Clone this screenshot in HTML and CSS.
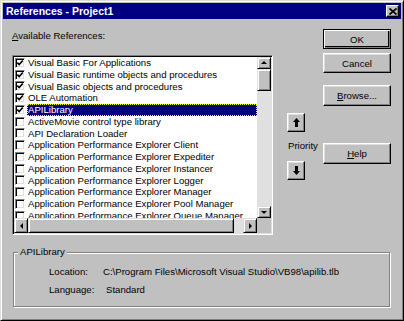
FILE: index.html
```html
<!DOCTYPE html>
<html>
<head>
<link rel="stylesheet" href="styles.css">
</head>
<body>
<div class="window">
    <div class="titlebar">
        <span class="title">References - Project1</span>
        <span class="close-btn"><svg width="8" height="7" viewBox="0 0 8 7"><path d="M0.5 0.5 L7.5 6.5 M7.5 0.5 L0.5 6.5" stroke="#000" stroke-width="1.7"/></svg></span>
    </div>
    <div class="main">
        <div class="col-list">
            <div class="caption"><u>A</u>vailable References:</div>
            <div class="listbox">
                <div class="items">
                    <div class="row"><span class="check on"></span><span class="name">Visual Basic For Applications</span></div>
                    <div class="row"><span class="check on"></span><span class="name">Visual Basic runtime objects and procedures</span></div>
                    <div class="row"><span class="check on"></span><span class="name">Visual Basic objects and procedures</span></div>
                    <div class="row"><span class="check on"></span><span class="name">OLE Automation</span></div>
                    <div class="row"><span class="check on"></span><span class="name selected">APILibrary</span></div>
                    <div class="row"><span class="check"></span><span class="name">ActiveMovie control type library</span></div>
                    <div class="row"><span class="check"></span><span class="name">API Declaration Loader</span></div>
                    <div class="row"><span class="check"></span><span class="name">Application Performance Explorer Client</span></div>
                    <div class="row"><span class="check"></span><span class="name">Application Performance Explorer Expediter</span></div>
                    <div class="row"><span class="check"></span><span class="name">Application Performance Explorer Instancer</span></div>
                    <div class="row"><span class="check"></span><span class="name">Application Performance Explorer Logger</span></div>
                    <div class="row"><span class="check"></span><span class="name">Application Performance Explorer Manager</span></div>
                    <div class="row"><span class="check"></span><span class="name">Application Performance Explorer Pool Manager</span></div>
                    <div class="row"><span class="check"></span><span class="name">Application Performance Explorer Queue Manager</span></div>
                </div>
                <div class="vscroll">
                    <div class="sbtn"><span class="tri up"></span></div>
                    <div class="vthumb"></div>
                    <div class="track"></div>
                    <div class="sbtn"><span class="tri down"></span></div>
                </div>
                <div class="hscroll">
                    <div class="sbtn"><span class="tri left"></span></div>
                    <div class="hthumb"></div>
                    <div class="track"></div>
                    <div class="sbtn"><span class="tri right"></span></div>
                </div>
                <div class="corner"></div>
            </div>
        </div>
        <div class="col-priority">
            <div class="btn arrow-btn"><svg width="7" height="9" viewBox="0 0 7 9"><path d="M3.5 0 L7 4 L5 4 L5 9 L2 9 L2 4 L0 4 Z" fill="#000"/></svg></div>
            <div class="priority">Priority</div>
            <div class="btn arrow-btn down-btn"><svg width="7" height="9" viewBox="0 0 7 9"><path d="M3.5 9 L7 5 L5 5 L5 0 L2 0 L2 5 L0 5 Z" fill="#000"/></svg></div>
        </div>
        <div class="col-buttons">
            <div class="btn default">OK</div>
            <div class="btn cancel">Cancel</div>
            <div class="btn browse"><u>B</u>rowse...</div>
            <div class="btn help"><u>H</u>elp</div>
        </div>
    </div>
    <fieldset class="info">
        <legend>APILibrary</legend>
        <div class="info-grid">
            <span>Location:</span><span>C:\Program Files\Microsoft Visual Studio\VB98\apilib.tlb</span>
            <span>Language:</span><span class="lang">Standard</span>
        </div>
    </fieldset>
</div>
</body>
</html>
```

FILE: styles.css
```css
body {
    margin: 0;
    background: #c0c0c0;
    font-family: "Liberation Sans", Arial, sans-serif;
    font-size: 9.6px;
    color: #000;
}

.window {
    width: 404px;
    height: 321px;
    box-sizing: border-box;
    border: 1px solid;
    border-color: #dfdfdf #000 #000 #dfdfdf;
    box-shadow: inset 1px 1px #fff, inset -1px -1px #808080;
    background: #c0c0c0;
    padding: 2px;
}

.titlebar {
    height: 16px;
    background: #000080;
    color: #fff;
    display: flex;
    align-items: center;
    justify-content: space-between;
    padding: 0 2px 0 3px;
}

.title {
    font-weight: bold;
    font-size: 10.5px;
}

.close-btn {
    width: 13px;
    height: 12px;
    box-sizing: border-box;
    background: #c0c0c0;
    border: 1px solid;
    border-color: #fff #000 #000 #fff;
    box-shadow: inset -1px -1px #808080;
    display: flex;
    align-items: center;
    justify-content: center;
}

.main {
    display: flex;
    padding-left: 9px;
    height: 216px;
}

/* list column */
.col-list {
    width: 261px;
}

.caption {
    margin-top: 11px;
    line-height: 12px;
    height: 12px;
}

.listbox {
    margin-top: 13px;
    height: 180px;
    box-sizing: border-box;
    border: 1px solid;
    border-color: #808080 #fff #fff #808080;
    box-shadow: inset 1px 1px #000, inset -1px -1px #dfdfdf;
    padding: 1px;
    background: #fff;
    display: grid;
    grid-template-columns: 1fr 14px;
    grid-template-rows: 161px 15px;
}

.items {
    overflow: hidden;
}

.row {
    height: 11.75px;
    display: flex;
    align-items: center;
    white-space: nowrap;
}

.check {
    flex: none;
    width: 10px;
    height: 10px;
    box-sizing: border-box;
    margin-left: 1px;
    margin-right: 2px;
    border: 1px solid;
    border-color: #808080 #fff #fff #808080;
    box-shadow: inset 1px 1px #000, inset -1px -1px #dfdfdf;
    background: #fff;
}

.check.on {
    background: #fff url("data:image/svg+xml,%3Csvg xmlns='http://www.w3.org/2000/svg' width='8' height='8'%3E%3Cpath d='M1.3 3.6 L3.2 5.6 L6.8 1.4' fill='none' stroke='%23000' stroke-width='1.6'/%3E%3C/svg%3E") no-repeat 0 0;
}

.name {
    flex: 1;
    height: 11.75px;
    line-height: 11.75px;
    padding-left: 1px;
}

.name.selected {
    background: #000080;
    color: #fff;
    outline: 1px dotted #ffff00;
    outline-offset: -1px;
}

/* scrollbars */
.vscroll {
    display: flex;
    flex-direction: column;
    background: #c0c0c0;
}

.hscroll {
    display: flex;
    background: #c0c0c0;
}

.corner {
    background: #c0c0c0;
}

.sbtn, .vthumb, .hthumb {
    box-sizing: border-box;
    background: #c0c0c0;
    border: 1px solid;
    border-color: #dfdfdf #000 #000 #dfdfdf;
    box-shadow: inset 1px 1px #fff, inset -1px -1px #808080;
    display: flex;
    align-items: center;
    justify-content: center;
}

.vscroll .sbtn {
    height: 12px;
}

.hscroll .sbtn {
    width: 14px;
}

.vthumb {
    height: 22px;
}

.hthumb {
    width: 206px;
}

.track {
    flex: 1;
    background: #e0e0e0;
}

.tri {
    width: 0;
    height: 0;
    border: 3px solid transparent;
}

.tri.up {
    border-bottom-color: #000;
    border-top-width: 0;
    margin-top: -1px;
}

.tri.down {
    border-top-color: #000;
    border-bottom-width: 0;
}

.tri.left {
    border-right-color: #000;
    border-left-width: 0;
}

.tri.right {
    border-left-color: #000;
    border-right-width: 0;
}

/* priority column */
.col-priority {
    width: 26px;
    margin-left: 14px;
}

.btn {
    box-sizing: border-box;
    background: #c0c0c0;
    border: 1px solid;
    border-color: #fff #000 #000 #fff;
    box-shadow: inset -1px -1px #808080, inset 1px 1px #dfdfdf;
    display: flex;
    align-items: center;
    justify-content: center;
}

.arrow-btn {
    width: 18px;
    height: 19px;
    margin-top: 94px;
}

.priority {
    margin-top: 8px;
    line-height: 12px;
    padding-left: 1px;
}

.down-btn {
    margin-top: 9px;
}

/* buttons column */
.col-buttons {
    width: 68px;
    margin-left: 10px;
}

.col-buttons .btn {
    height: 20px;
}

.btn.default {
    margin-top: 10px;
    border-color: #000;
    box-shadow: inset 1px 1px #fff, inset -1px -1px #808080, inset -2px -2px #000;
}

.btn.cancel {
    margin-top: 4px;
}

.btn.browse {
    margin-top: 12px;
    height: 21px;
}

.btn.help {
    margin-top: 37px;
    height: 21px;
}

/* info group */
.info {
    margin: 11px 0 0 10px;
    width: 377px;
    height: 61px;
    box-sizing: border-box;
    border: 1px solid #808080;
    box-shadow: inset 1px 1px #fff, 1px 1px #fff;
    padding: 8px 0 0 0;
}

.info legend {
    padding: 0 2px;
    margin-left: 4px;
    line-height: 12px;
    background: #c0c0c0;
}

.info-grid {
    display: grid;
    grid-template-columns: 54px auto;
    row-gap: 6px;
    line-height: 12px;
    padding-left: 35px;
}

.lang {
    padding-left: 3px;
}
```
